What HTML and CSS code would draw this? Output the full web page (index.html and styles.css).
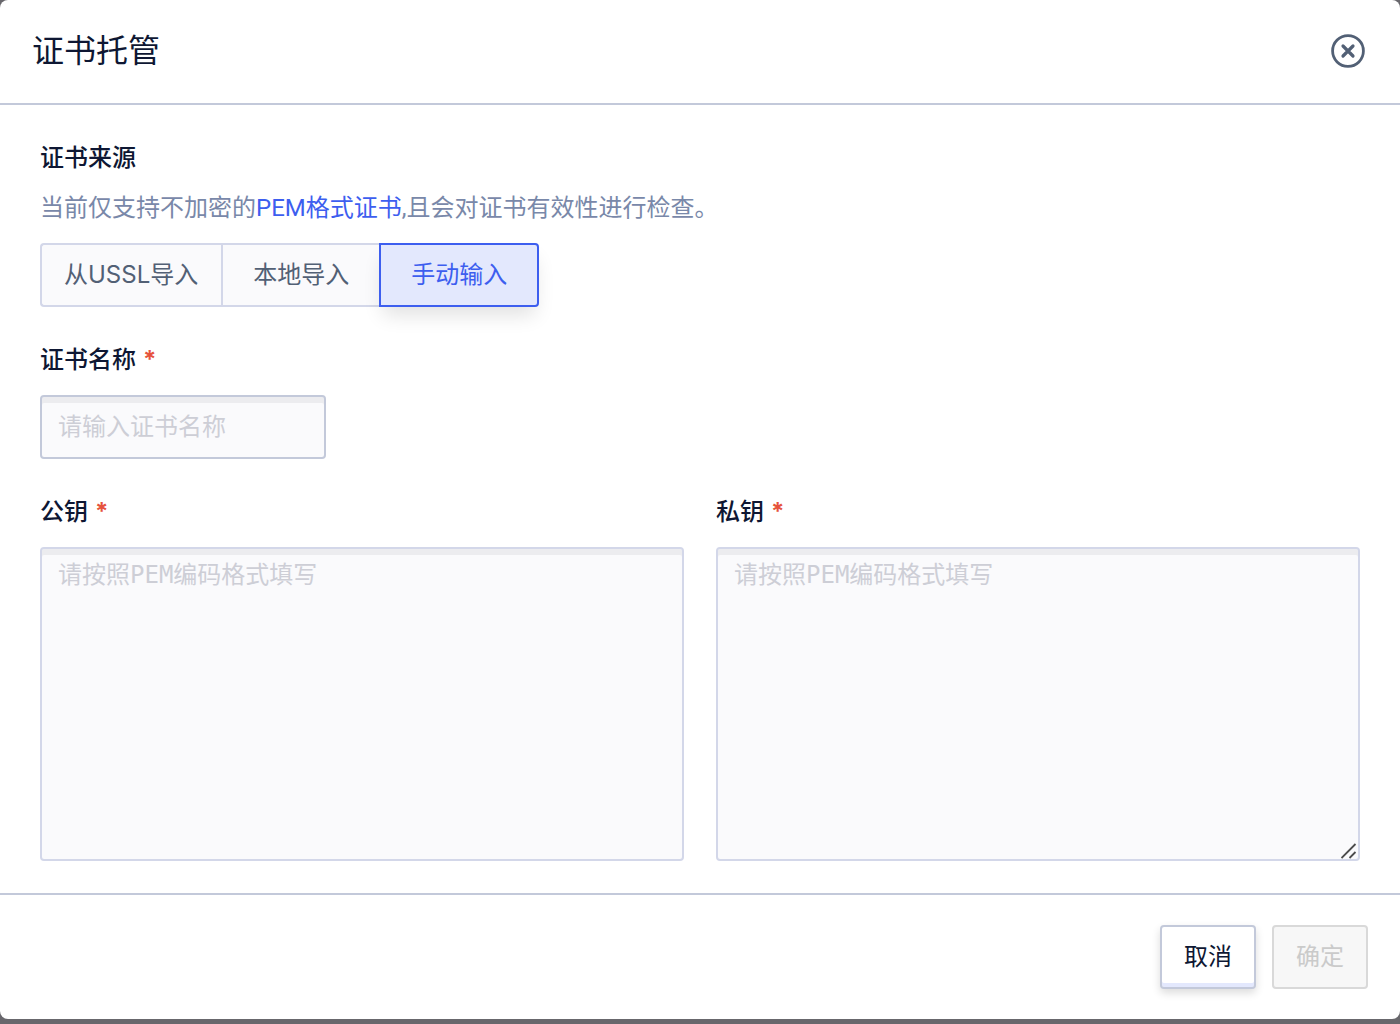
FILE: index.html
```
<!DOCTYPE html>
<html lang="zh-CN">
<head>
<meta charset="utf-8">
<meta name="viewport" content="width=device-width, initial-scale=1">
<title>证书托管</title>
<link rel="stylesheet" href="styles.css">
</head>
<body>
<form class="modal" role="dialog" aria-labelledby="modal-title">
  <header class="modal-header">
    <h1 class="modal-title" id="modal-title">证书托管</h1>
    <button class="close" type="button" aria-label="关闭">
      <svg viewBox="0 0 36 36" width="36" height="36" fill="none" stroke="currentColor">
        <circle cx="18" cy="18" r="15.4" stroke-width="2.8"/>
        <path d="M13 13l10 10M23 13L13 23" stroke-width="3.2" stroke-linecap="round"/>
      </svg>
    </button>
  </header>

  <main class="modal-body">
    <section class="field">
      <h2 class="label">证书来源</h2>
      <p class="hint">当前仅支持不加密的<a class="link" href="#pem">PEM格式证书</a>,且会对证书有效性进行检查。</p>
      <div class="segmented">
        <button class="segment" type="button">从USSL导入</button>
        <button class="segment segment-wide" type="button">本地导入</button>
        <button class="segment segment-wide segment-active" type="button" aria-pressed="true">手动输入</button>
      </div>
    </section>

    <div class="field">
      <label class="label" for="cert-name">证书名称<span class="required">*</span></label>
      <input class="control name-input" id="cert-name" type="text" placeholder="请输入证书名称">
    </div>

    <div class="keys">
      <div class="field">
        <label class="label" for="public-key">公钥<span class="required">*</span></label>
        <div class="area-wrap">
          <textarea class="control area" id="public-key" placeholder="请按照PEM编码格式填写"></textarea>
        </div>
      </div>
      <div class="field">
        <label class="label" for="private-key">私钥<span class="required">*</span></label>
        <div class="area-wrap">
          <textarea class="control area" id="private-key" placeholder="请按照PEM编码格式填写"></textarea>
          <svg class="grip" viewBox="0 0 16 16" width="16" height="16" fill="none" stroke="#4c4c4c" stroke-width="1.8" aria-hidden="true">
            <path d="M.5 15L14.500 1M8.500 15l6-6"/>
          </svg>
        </div>
      </div>
    </div>
  </main>

  <footer class="modal-footer">
    <button class="button button-default" type="button">取消</button>
    <button class="button button-primary" type="submit" disabled>确定</button>
  </footer>
</form>
</body>
</html>
```
FILE: styles.css
```
* {
  box-sizing: border-box;
}

body {
  margin: 0;
  min-height: 100vh;
  background: #68676c;
  color: #0e1733;
  font-family: Inter, "Noto Sans CJK SC", sans-serif;
  font-size: 24px;
}

button,
input {
  font: inherit;
}

h1,
h2,
p {
  margin: 0;
}

.modal {
  background: #fff;
  border-radius: 8px;
}

.modal-header {
  display: flex;
  align-items: center;
  justify-content: space-between;
  padding: 27px 34px 28px 32px;
  border-bottom: 2px solid #c3c9da;
}

.modal-title {
  font-size: 32px;
  font-weight: 400;
  line-height: 48px;
}

.close {
  display: flex;
  width: 36px;
  height: 36px;
  padding: 0;
  border: 0;
  background: none;
  color: #526075;
}

.modal-body {
  display: flex;
  flex-direction: column;
  gap: 32px;
  padding: 32px 40px;
}

.label {
  display: block;
  margin-bottom: 14px;
  font-size: 24px;
  font-weight: 500;
  line-height: 42px;
}

.required {
  margin-left: 7px;
  color: #e6533c;
  font-weight: 700;
}

.hint {
  margin: -6px 0 14px;
  color: #7988a9;
  font-family: Roboto, "Noto Sans CJK SC", sans-serif;
  line-height: 42px;
}

.link {
  color: #3d5eef;
  text-decoration: none;
}

.segmented {
  display: flex;
}

.segment {
  height: 64px;
  padding: 0 23px 5px 22px;
  border: 2px solid #d3d7e9;
  border-right-width: 0;
  background: #fafafc;
  color: #526075;
}

.segment:first-child {
  border-radius: 4px 0 0 4px;
}

.segment-wide {
  padding: 0 30px 5px;
}

.segment-active {
  border: 2px solid #3d5eef;
  border-radius: 0 4px 4px 0;
  background: #e3e8fd;
  box-shadow: 0 12px 20px -4px rgba(0, 0, 0, 0.12);
  color: #3d5eef;
}

.control {
  display: block;
  border: 2px solid #d3d7e9;
  border-radius: 4px;
  background: #fafafc;
  box-shadow: inset 0 6px 0 #ececef;
  color: #0e1733;
  outline: none;
}

.control::placeholder {
  color: #cdced6;
  opacity: 1;
}

.name-input {
  width: 286px;
  max-width: 100%;
  height: 64px;
  padding: 0 16px 2px;
  border-color: #c3c9da;
}

.keys {
  display: grid;
  grid-template-columns: 1fr 1fr;
  gap: 32px;
}

.area-wrap {
  position: relative;
}

.area {
  width: 100%;
  height: 314px;
  padding: 8px 16px;
  font-family: "DejaVu Sans Mono", "Noto Sans CJK SC", monospace;
  font-size: 24px;
  line-height: 36px;
  resize: none;
}

.grip {
  position: absolute;
  right: 3px;
  bottom: 2px;
}

.modal-footer {
  display: flex;
  justify-content: flex-end;
  gap: 16px;
  padding: 30px 32px;
  border-top: 2px solid #c3c9da;
}

.button {
  height: 64px;
  padding: 0 22px 5px;
  border: 2px solid #c3c9da;
  border-radius: 4px;
}

.button-default {
  background: #fff;
  box-shadow: inset 0 -4px 0 #e3e8fd, 0 4px 8px rgba(0, 0, 0, 0.14);
  color: #0e1733;
}

.button-primary {
  border-color: #d9d9d9;
  background: #f7f7f7;
  color: #cacaca;
}
```
